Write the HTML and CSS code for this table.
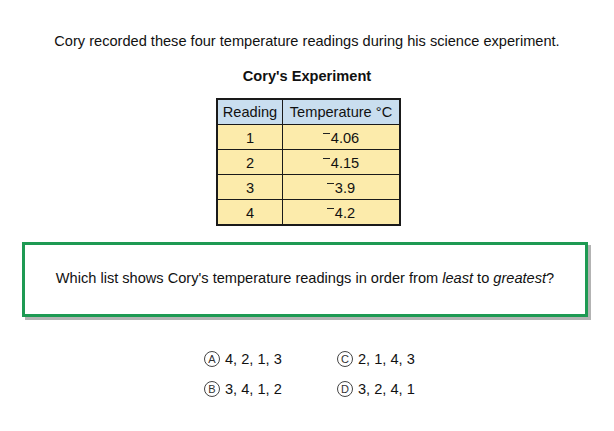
FILE: index.html
```html
<!DOCTYPE html>
<html>
<head>
<meta charset="utf-8">
<link rel="stylesheet" href="styles.css">
</head>
<body>
<p class="intro">Cory recorded these four temperature readings during his science experiment.</p>
<h1 class="title">Cory's Experiment</h1>
<table class="data">
  <thead>
    <tr><th class="c1">Reading</th><th class="c2">Temperature °C</th></tr>
  </thead>
  <tbody>
    <tr><td>1</td><td><span class="neg"></span>4.06</td></tr>
    <tr><td>2</td><td><span class="neg"></span>4.15</td></tr>
    <tr><td>3</td><td><span class="neg"></span>3.9</td></tr>
    <tr><td>4</td><td><span class="neg"></span>4.2</td></tr>
  </tbody>
</table>
<div class="question">
  <p>Which list shows Cory's temperature readings in order from <i>least</i> to <i>greatest</i>?</p>
</div>
<div class="options">
  <div class="opt"><span class="bubble">A</span>4, 2, 1, 3</div>
  <div class="opt"><span class="bubble">C</span>2, 1, 4, 3</div>
  <div class="opt"><span class="bubble">B</span>3, 4, 1, 2</div>
  <div class="opt"><span class="bubble">D</span>3, 2, 4, 1</div>
</div>
</body>
</html>
```
FILE: styles.css
```css
html, body {
  margin: 0;
  padding: 0;
  background: #fff;
}
body {
  font-family: "Liberation Sans", Arial, sans-serif;
  font-size: 14.6px;
  color: #111;
  width: 614px;
}
.intro {
  margin: 32px 0 0;
  text-align: center;
  line-height: 18px;
}
.title {
  margin: 17px 0 0;
  font-size: 14.6px;
  font-weight: bold;
  text-align: center;
  line-height: 18px;
}
.data {
  margin: 13px auto 0 216px;
  border-collapse: collapse;
  border: 2px solid #1a1a1a;
  font-size: 14.6px;
}
.data th, .data td {
  border: 1px solid #1a1a1a;
  text-align: center;
  font-weight: normal;
  height: 24px;
  padding: 0;
  line-height: 18px;
}
.data th {
  background: #c9deef;
}
.data td {
  background: #fcebab;
  padding-top: 2px;
  height: 22px;
}
.c1 { width: 64px; }
.c2 { width: 116px; }
.neg {
  display: inline-block;
  width: 7px;
  height: 0;
  border-top: 1.5px solid #222;
  vertical-align: 9px;
  margin-right: 1px;
}
.question {
  margin: 16px 26px 0 22px;
  height: 65px;
  padding-bottom: 4px;
  box-sizing: content-box;
  border: 3px solid #1e9a53;
  box-shadow: 3px 3px 0 #b3b3b3;
  display: flex;
  align-items: center;
  justify-content: center;
}
.question p {
  margin: 0;
  line-height: 18px;
}
.options {
  margin: 33px 0 0 204px;
  display: grid;
  grid-template-columns: 133px 120px;
  row-gap: 12px;
}
.opt {
  display: flex;
  align-items: center;
  line-height: 18px;
}
.bubble {
  display: inline-flex;
  align-items: center;
  justify-content: center;
  width: 14px;
  height: 14px;
  border: 1px solid #444;
  border-radius: 50%;
  font-size: 11px;
  line-height: 1;
  margin-right: 5px;
  color: #333;
}
```
